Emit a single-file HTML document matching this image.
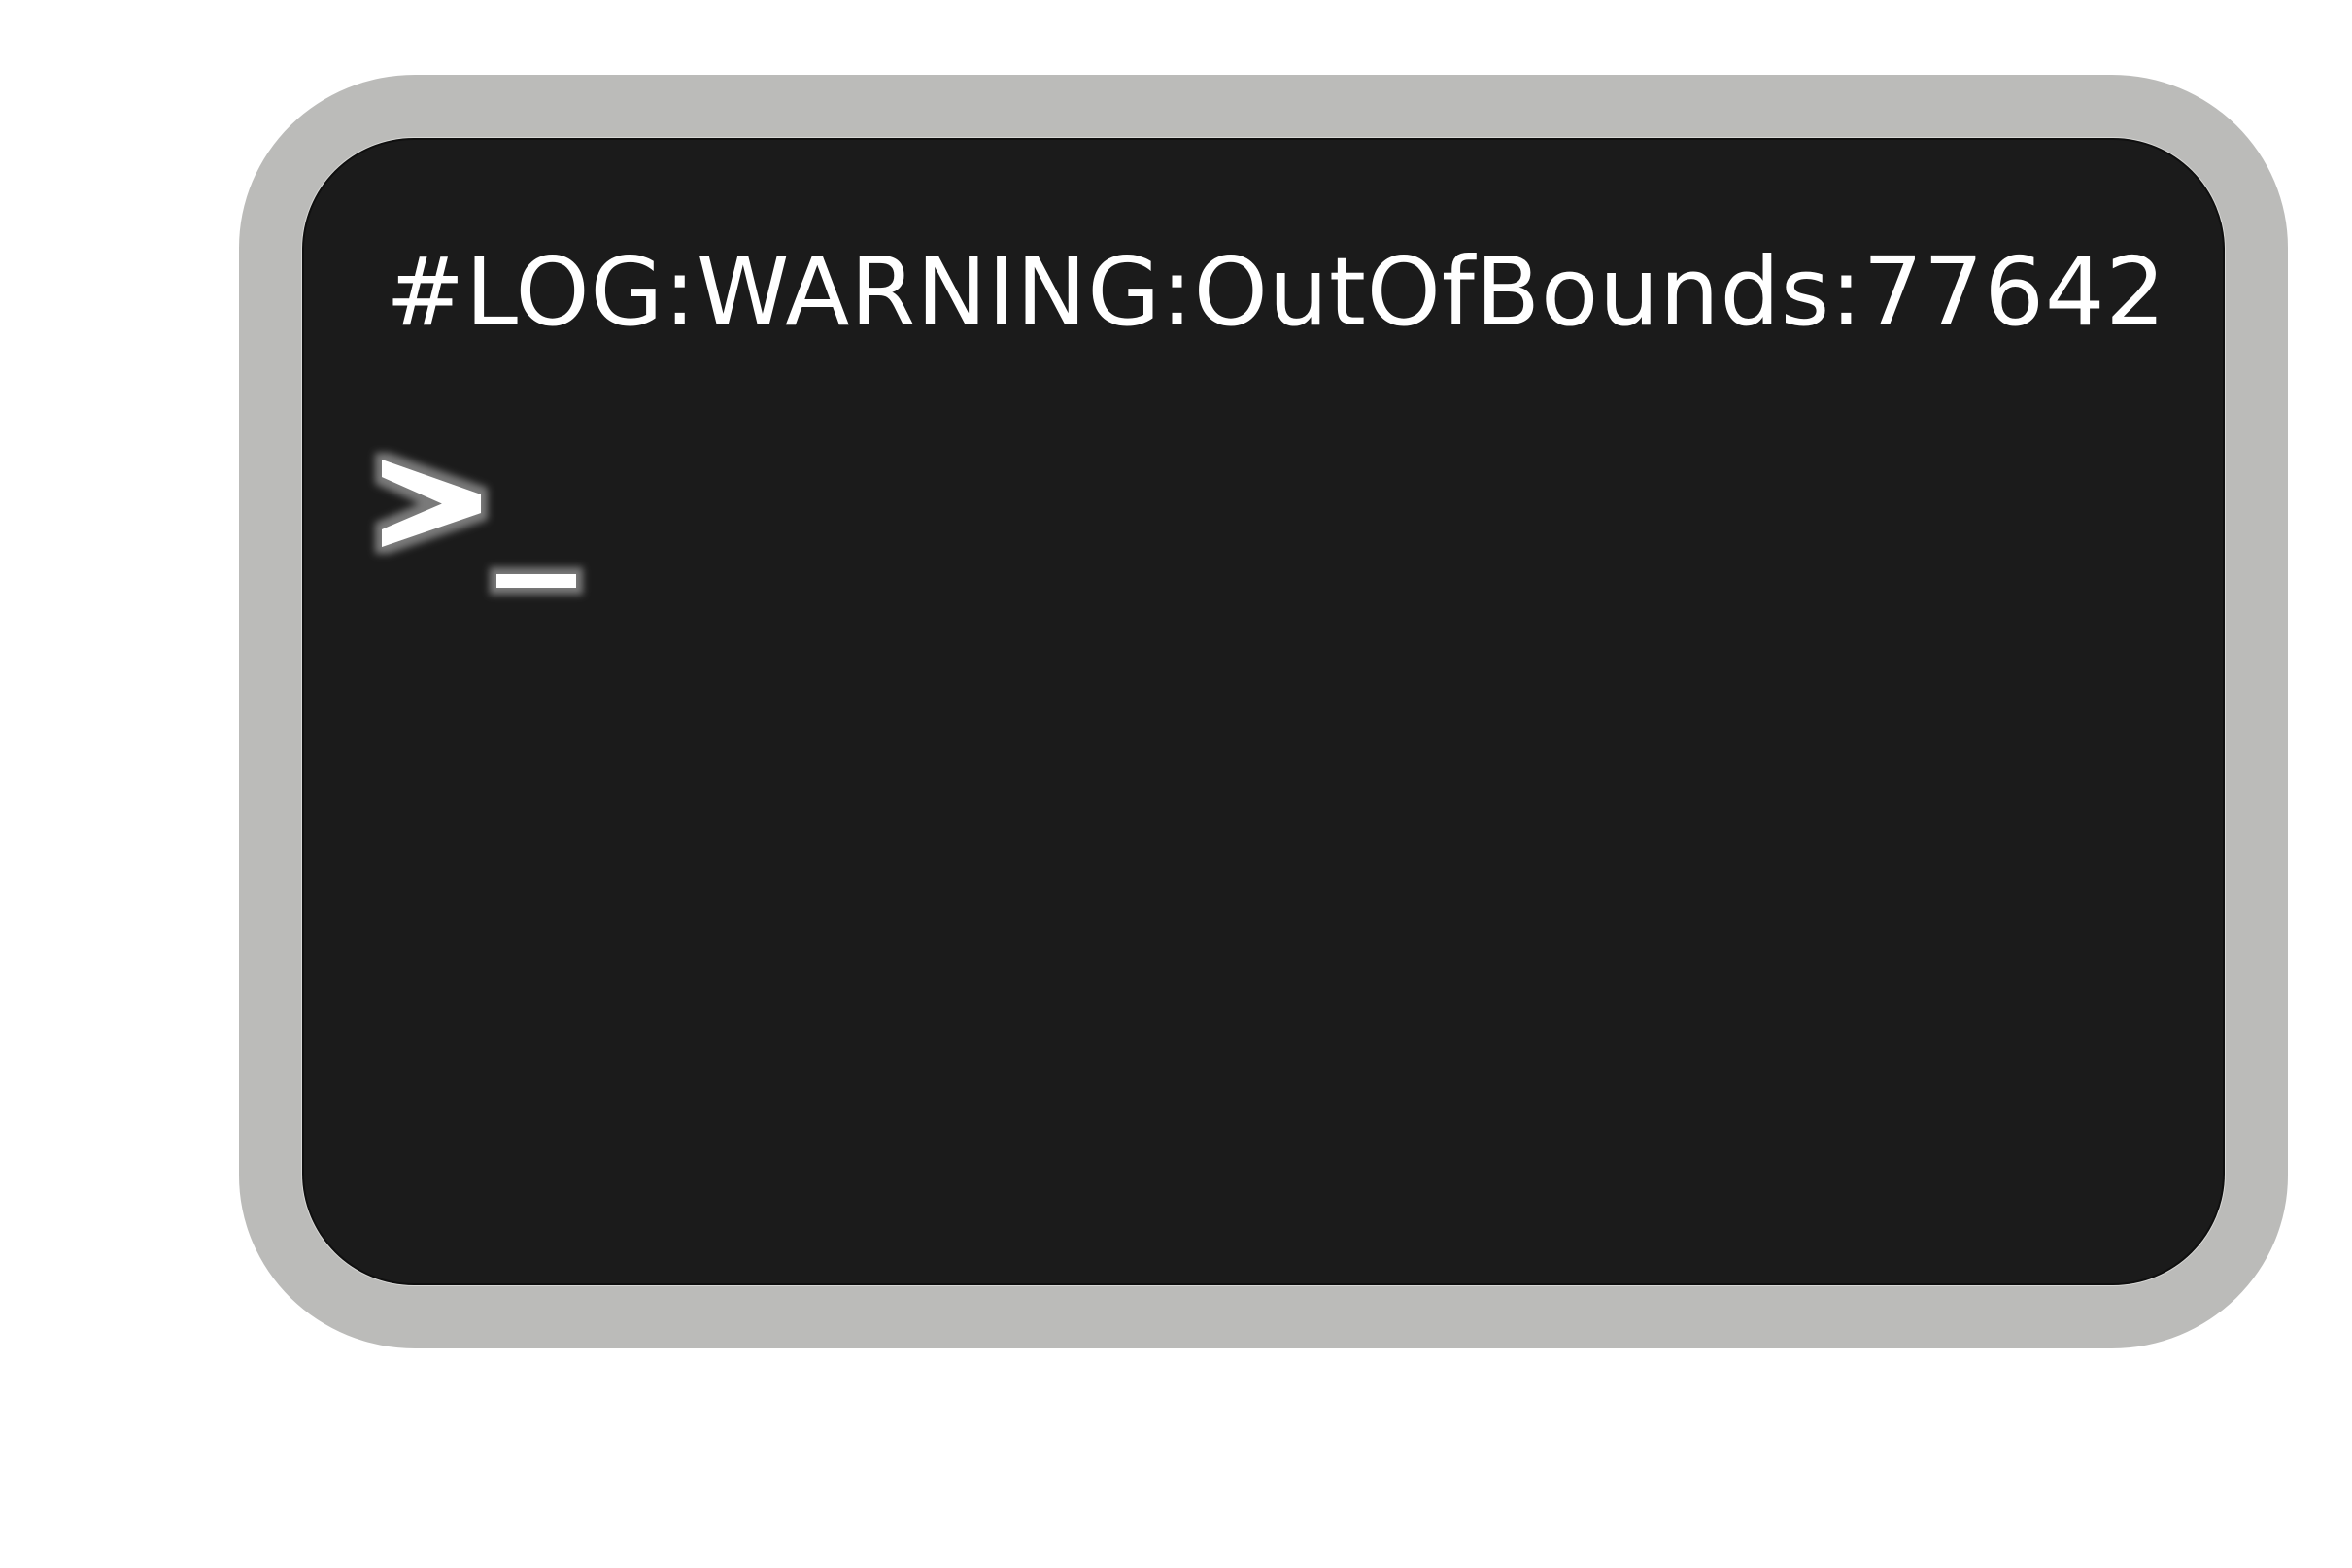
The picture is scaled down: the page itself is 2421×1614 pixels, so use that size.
<!DOCTYPE html>
<html><head><meta charset="utf-8"><style>
html,body{margin:0;padding:0;background:#fff;width:2421px;height:1614px;overflow:hidden}
</style></head><body>
<svg width="2421" height="1614" viewBox="0 0 2421 1614" xmlns="http://www.w3.org/2000/svg">
<defs>
<filter id="glow" x="-30%" y="-30%" width="160%" height="160%">
<feMorphology in="SourceAlpha" operator="dilate" radius="7" result="d"/>
<feGaussianBlur in="d" stdDeviation="4" result="b"/>
<feFlood flood-color="#7a7a7a"/>
<feComposite in2="b" operator="in" result="g"/>
<feMerge><feMergeNode in="g"/><feMergeNode in="SourceGraphic"/></feMerge>
</filter>
</defs>
<rect x="246" y="77" width="2109" height="1311" rx="181" ry="178" fill="#bbbbb9"/>
<rect x="310" y="141" width="1981" height="1183" rx="116" ry="116" fill="#d8d8d6"/>
<rect x="311" y="142" width="1979" height="1181" rx="115" ry="115" fill="#0f0f0f"/>
<rect x="313" y="144" width="1975" height="1177" rx="113" ry="113" fill="#1b1b1b"/>
<text x="397" y="334" font-family="'DejaVu Sans','Liberation Sans',sans-serif" font-size="97" fill="#fff" textLength="1832" lengthAdjust="spacing">#LOG:WARNING:OutOfBounds:77642</text>
<g filter="url(#glow)" fill="#fff">
<polygon points="393,473 495,509 495,528 393,563 393,545 455,518.5 393,491"/>
<rect x="511" y="591" width="82" height="14"/>
</g>
</svg>
</body></html>
